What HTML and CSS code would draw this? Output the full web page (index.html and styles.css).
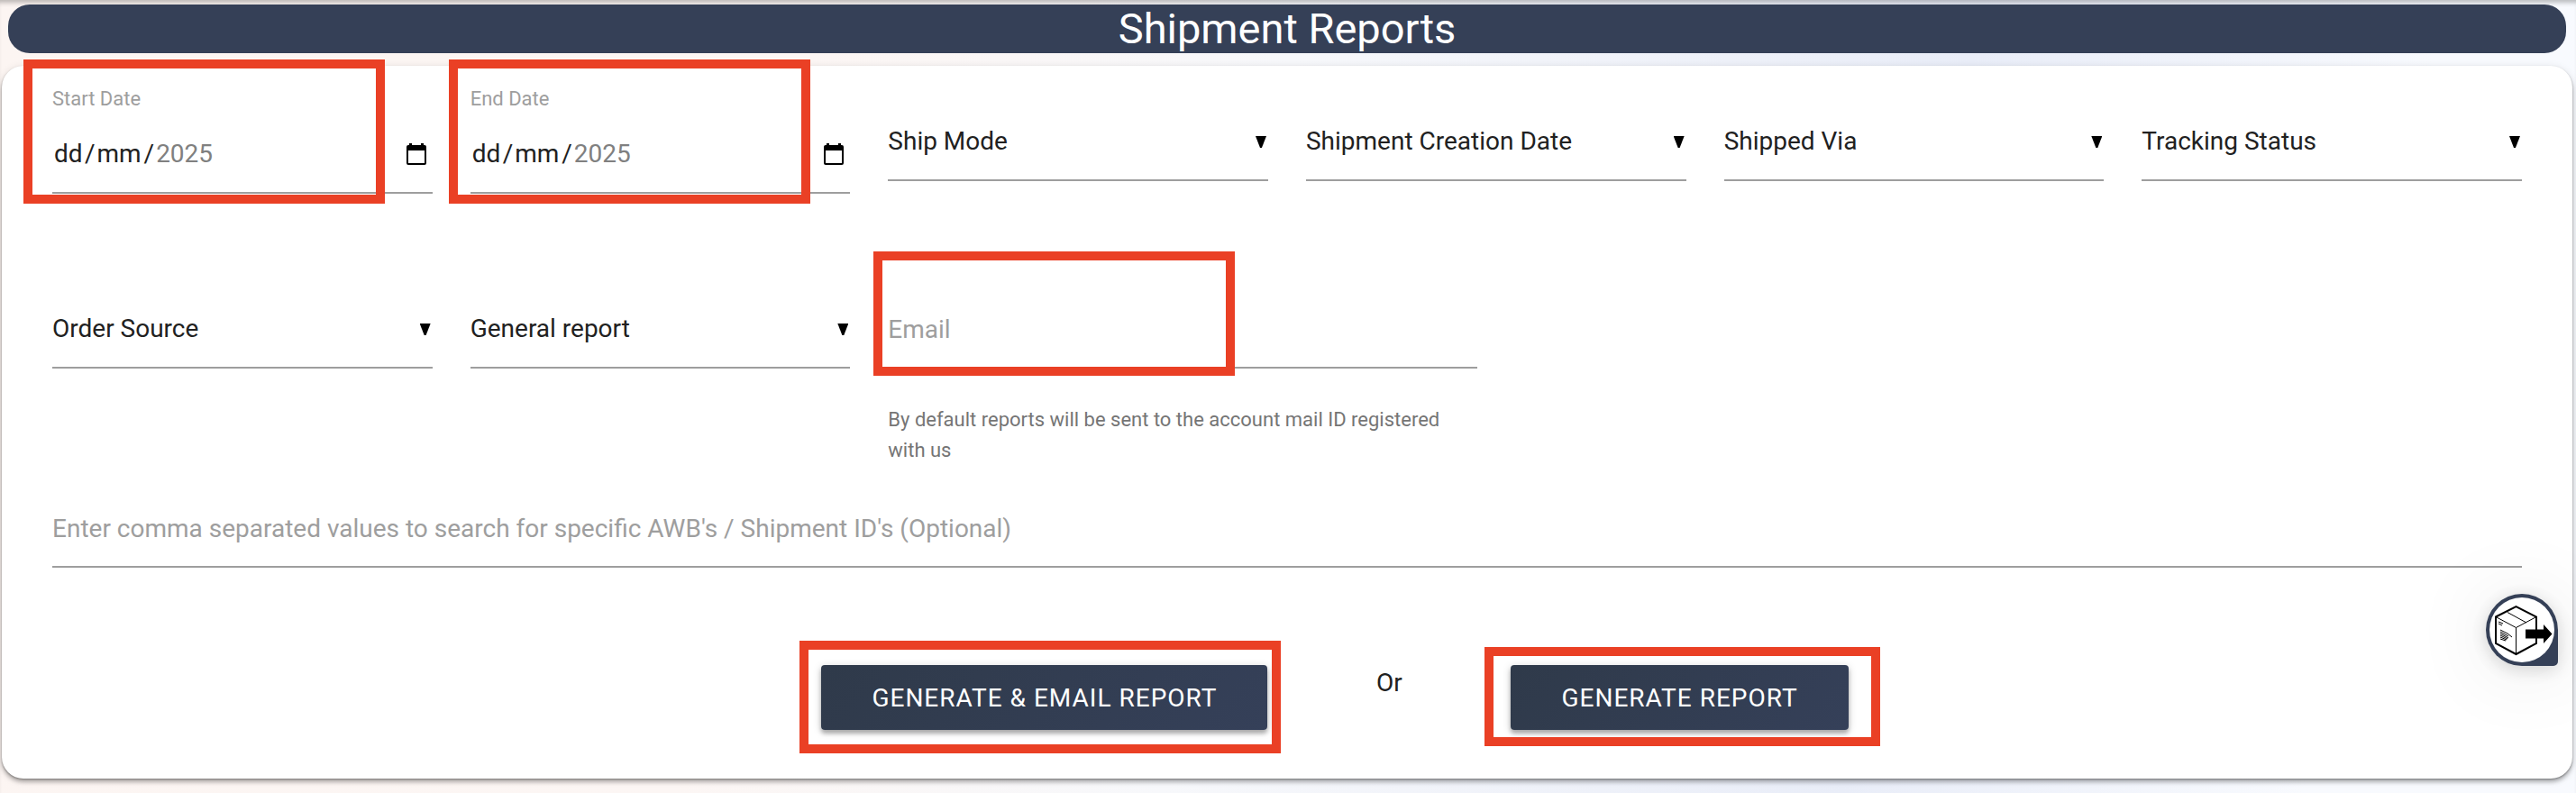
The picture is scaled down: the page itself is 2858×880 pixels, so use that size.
FILE: index.html
```html
<!DOCTYPE html>
<html lang="en">
<head>
<meta charset="utf-8">
<title>Shipment Reports</title>
<link rel="stylesheet" href="styles.css">
</head>
<body>
<main class="page">
  <h1 class="title">Shipment Reports</h1>
  <form class="card">
    <div class="grid">
      <div class="field field-date marked">
        <label class="caption" for="start">Start Date</label>
        <div class="line date">
          <input class="date-day" id="start" type="text" value="dd" aria-label="Start day"><span>/</span>
          <input class="date-month" type="text" value="mm" aria-label="Start month"><span>/</span>
          <input class="date-year" type="text" value="2025" aria-label="Start year">
          <button class="cal" type="button" aria-label="Pick start date"><svg viewBox="0 0 22 24"><path d="M3 0h3v2h10V0h3v2h1a2 2 0 0 1 2 2v18a2 2 0 0 1-2 2H2a2 2 0 0 1-2-2V4a2 2 0 0 1 2-2h1zM2 8v14h18V8z" fill-rule="evenodd"/></svg></button>
        </div>
      </div>
      <div class="field field-date marked">
        <label class="caption" for="end">End Date</label>
        <div class="line date">
          <input class="date-day" id="end" type="text" value="dd" aria-label="End day"><span>/</span>
          <input class="date-month" type="text" value="mm" aria-label="End month"><span>/</span>
          <input class="date-year" type="text" value="2025" aria-label="End year">
          <button class="cal" type="button" aria-label="Pick end date"><svg viewBox="0 0 22 24"><path d="M3 0h3v2h10V0h3v2h1a2 2 0 0 1 2 2v18a2 2 0 0 1-2 2H2a2 2 0 0 1-2-2V4a2 2 0 0 1 2-2h1zM2 8v14h18V8z" fill-rule="evenodd"/></svg></button>
        </div>
      </div>
      <div class="field pick"><select class="line" aria-label="Ship Mode"><option>Ship Mode</option></select></div>
      <div class="field pick"><select class="line" aria-label="Shipment Creation Date"><option>Shipment Creation Date</option></select></div>
      <div class="field pick"><select class="line" aria-label="Shipped Via"><option>Shipped Via</option></select></div>
      <div class="field pick"><select class="line" aria-label="Tracking Status"><option>Tracking Status</option></select></div>
    </div>
    <div class="grid second">
      <div class="field pick"><select class="line" aria-label="Order Source"><option>Order Source</option></select></div>
      <div class="field pick"><select class="line" aria-label="Report type"><option>General report</option></select></div>
      <div class="field wide marked marked-email">
        <input class="line" type="email" placeholder="Email" aria-label="Email">
        <p class="help">By default reports will be sent to the account mail ID registered with us</p>
      </div>
    </div>
    <input class="line search" type="text" placeholder="Enter comma separated values to search for specific AWB's / Shipment ID's (Optional)" aria-label="AWB's or Shipment ID's">
    <div class="actions">
      <div class="action marked marked-first"><button class="btn" type="button">GENERATE &amp; EMAIL REPORT</button></div>
      <span class="or">Or</span>
      <div class="action marked marked-last"><button class="btn" type="button">GENERATE REPORT</button></div>
    </div>
  </form>
  <button class="bubble" type="button" aria-label="Shipments">
    <svg viewBox="0 0 72 72" fill="none" stroke="#000">
      <path d="M7 21.500 29.500 10 52 21.500V51L29.500 63 7 51z" stroke-width="2"/>
      <path d="M7 21.500 29.500 33.500 52 21.500M29.500 33.500V63M20 16.500 41 28" stroke-width="1"/>
      <path d="M10 27l5 2M10 29l4 2M12 36l8 4 5 4M12 38l9 5M12 40l9 5M12 42l8 4M12 44l7 3M12 46l6 2" stroke-width="1"/>
      <path d="M40 35.500h20V30l9.500 10.500L60 51v-5.500H40z" fill="#000" stroke="none"/>
    </svg>
  </button>
</main>
</body>
</html>
```
FILE: styles.css
```css
*, *::before, *::after { box-sizing: border-box; }

body {
  margin: 0;
  font-family: Roboto, sans-serif;
  font-size: 28px;
  color: #212121;
  background: linear-gradient(100deg, #fcf5f2 0%, #fcf6f4 30%, #f7f8fb 48%, #e9edf8 73%, #f8fafe 90%, #f8fafe 100%);
}

.page {
  min-height: 100vh;
  padding: 5px 4px 16px 2px;
  box-shadow: inset 0 6px 5px -3px rgba(0, 0, 0, .25);
}

.title {
  margin: 0 7px 14px;
  border-radius: 24px;
  background: #354057;
  color: #fff;
  font-size: 47px;
  font-weight: 400;
  line-height: 54px;
  text-align: center;
}

.card {
  padding: 23px 56px 54px;
  border-radius: 24px;
  background: #fff;
  box-shadow: 0 4px 4px rgba(0, 0, 0, .24), 0 1px 2px rgba(0, 0, 0, .3), 0 2px 10px rgba(0, 0, 0, .12);
}

.grid {
  display: grid;
  grid-template-columns: repeat(12, 1fr);
  column-gap: 42px;
  align-items: start;
}

.second { margin-top: 102px; }

.field { grid-column: span 2; }
.wide { grid-column: span 3; padding-top: 4px; }
.pick { padding-top: 17px; }
.second .pick { padding-top: 4px; }

input, select, button {
  font: inherit;
  color: inherit;
  border: 0;
  border-radius: 0;
  outline: 0;
  background: none;
  padding: 0;
  margin: 0;
}

.line {
  display: block;
  width: 100%;
  height: 88px;
  border-bottom: 2px solid #9e9e9e;
}

input.line { padding-top: 2px; }
.line::placeholder { color: #9e9e9e; opacity: 1; }

select.line { appearance: none; }

.pick { position: relative; }
.pick::after {
  content: "";
  position: absolute;
  right: 2px;
  bottom: 37px;
  width: 12px;
  height: 13px;
  background: #000;
  clip-path: polygon(0 0, 100% 0, 58% 100%, 42% 100%);
}

.caption {
  display: block;
  line-height: 28px;
  font-size: 22px;
  color: #9e9e9e;
}

.date {
  display: flex;
  align-items: center;
  gap: 2px;
  height: 91px;
  padding: 4px 7px 0 2px;
}
.date-day { width: 32px; }
.date-month { width: 50px; }
.date-year { width: 80px; color: #808080; }
.cal { width: 22px; height: 24px; margin-left: auto; }
.cal svg { display: block; width: 100%; height: 100%; }

.help {
  margin: 40px 0 0;
  font-size: 22px;
  line-height: 34px;
  color: #757575;
}

.search { margin-top: 25px; }

.actions {
  display: flex;
  justify-content: center;
  margin-top: 108px;
  margin-right: -106px;
}

.or { width: 270px; line-height: 40px; text-align: center; }

.btn {
  display: block;
  height: 72px;
  padding: 0 56px;
  border-radius: 4px;
  background: linear-gradient(135deg, #2f3a4a, #354059);
  color: #fff;
  letter-spacing: 1px;
  box-shadow: 0 4px 4px rgba(0, 0, 0, .24), 0 2px 10px rgba(0, 0, 0, .2);
}

/* Highlight frames drawn over the fields and buttons */
.marked { position: relative; }
.marked::before {
  content: "";
  position: absolute;
  border: 10px solid #ea4025;
  pointer-events: none;
  z-index: 1;
}
.field-date::before { top: -30px; bottom: -11px; left: -32px; right: 53px; }
.field-date + .field-date::before { left: -24px; right: 44px; }
.marked-email::before { top: -38px; height: 138px; left: -16px; right: 269px; }
.marked-first::before { inset: -27px -15px -26px -24px; }
.marked-last::before { inset: -20px -35px -18px -29px; }

.bubble {
  position: fixed;
  right: 20px;
  bottom: 141px;
  width: 80px;
  height: 80px;
  padding: 4px;
  border-radius: 50% 50% 5px 50%;
  background: #354057;
  box-shadow: 0 4px 20px rgba(0, 0, 0, .16), 0 4px 90px rgba(0, 0, 0, .1);
}
.bubble svg { display: block; width: 72px; height: 72px; border-radius: 50%; background: #fff; }
```
